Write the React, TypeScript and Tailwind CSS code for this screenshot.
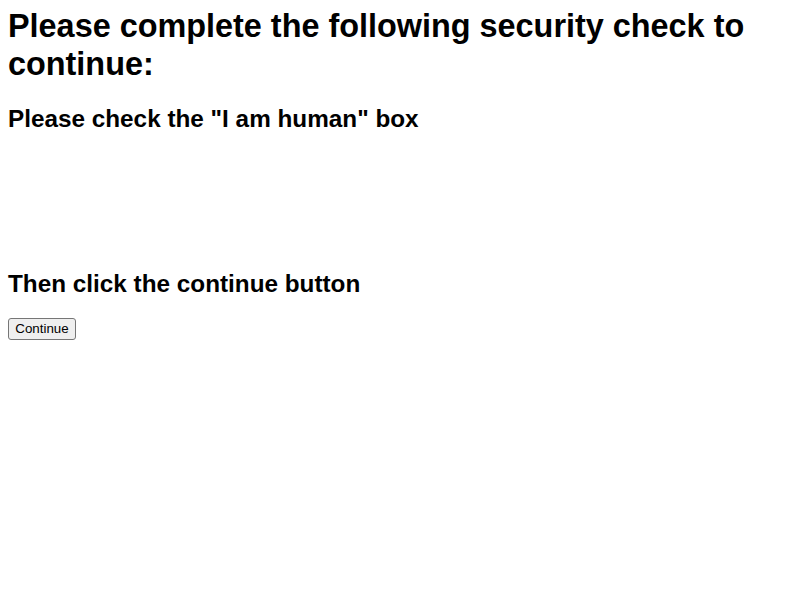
export default function App() {
  return (
    <div className="px-2 pt-[7px] text-black bg-white min-h-[600px]" style={{ fontFamily: '"Liberation Sans", Arial, sans-serif' }}>
      <h1 className="text-[32.4px] font-bold leading-[38px]">
        Please complete the following security check to continue:
      </h1>
      <h2 className="mt-[22px] text-[24.3px] font-bold leading-[28px]">Please check the "I am human" box</h2>
      <div className="h-[137px]" />
      <h2 className="text-[24.3px] font-bold leading-[28px]">Then click the continue button</h2>
      <div className="mt-[18px]">
        <button className="h-[22px] w-[68px] text-[13.33px] leading-[15px] bg-[#efefef] border border-[#767676] rounded-[3px] text-black">
          Continue
        </button>
      </div>
    </div>
  );
}
